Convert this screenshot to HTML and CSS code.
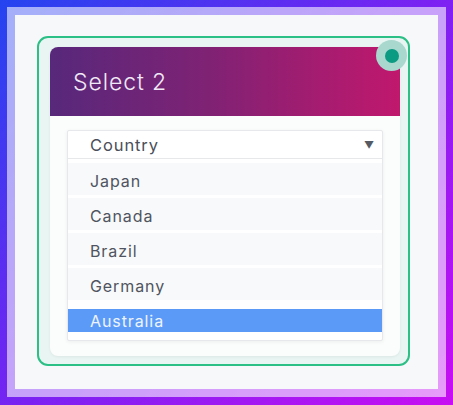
FILE: index.html
```html
<!DOCTYPE html>
<html>
<head>
<meta charset="utf-8">
<link rel="stylesheet" href="styles.css">
</head>
<body>
<div class="frame">
  <div class="card">
    <span class="badge"><span class="dot"></span></span>
    <div class="inner">
      <div class="header">Select 2</div>
      <div class="body">
        <div class="select">
          <div class="select-head"><span>Country</span><span class="arrow">▼</span></div>
          <ul class="list">
            <li class="opt">Japan</li>
            <li class="opt">Canada</li>
            <li class="opt">Brazil</li>
            <li class="opt">Germany</li>
            <li class="opt selected"><span>Australia</span></li>
          </ul>
        </div>
      </div>
    </div>
  </div>
</div>
</body>
</html>
```
FILE: styles.css
```css
html, body { margin: 0; padding: 0; }
body {
  width: 453px;
  height: 405px;
  box-sizing: border-box;
  padding: 7px 7px 8px 7px;
  background: linear-gradient(135deg, #2444f0 0%, #7a22f2 50%, #c80ef2 100%);
  font-family: Inter, "Open Sans", sans-serif;
}
.frame {
  height: 390px;
  box-sizing: border-box;
  border: 8px solid rgba(255,255,255,0.58);
  background: #f6f8fa;
  background-clip: padding-box;
  padding: 21px 28px 23px 22px;
}
.card {
  position: relative;
  height: 100%;
  box-sizing: border-box;
  border: 2.5px solid #2cbf86;
  border-radius: 11px;
  background: #e9f5f2;
  padding: 9px 8px 8px 11px;
}
.badge {
  position: absolute;
  right: 1px;
  top: 2px;
  width: 31px;
  height: 31px;
  border-radius: 50%;
  background: #a9d8cf;
  display: flex;
  align-items: center;
  justify-content: center;
}
.dot {
  width: 14px;
  height: 14px;
  border-radius: 50%;
  background: #0b9a82;
}
.inner {
  height: 100%;
  border-radius: 8px;
  background: #fbfcfc;
  box-shadow: 0 1px 3px rgba(0,0,0,0.06);
  overflow: hidden;
  display: flex;
  flex-direction: column;
}
.header {
  height: 69px;
  flex: none;
  box-sizing: border-box;
  padding-left: 23px;
  display: flex;
  align-items: center;
  background: linear-gradient(90deg, #57287b 0%, #7f2274 45%, #c0186d 100%);
  color: #f1e9f5;
  font-size: 23px;
  font-weight: 300;
  letter-spacing: 0.9px;
}
.body {
  padding: 14px 17px 0 17px;
}
.select {
  background: #fff;
  border: 1px solid #e6e8eb;
  border-radius: 2px;
  box-shadow: 0 1px 4px rgba(0,0,0,0.06);
}
.select-head {
  height: 27px;
  border-bottom: 1px solid #e7e8ea;
  display: flex;
  align-items: center;
  justify-content: space-between;
  padding: 0 8px 0 22px;
  color: #4a4f59;
  font-size: 16.5px;
  letter-spacing: 0.9px;
}
.arrow {
  font-size: 10px;
  color: #555a63;
  letter-spacing: 0;
}
.list {
  list-style: none;
  margin: 0;
  padding: 4px 0 2px 0;
}
.opt {
  height: 35px;
  box-sizing: border-box;
  border-bottom: 3px solid #fff;
  background: #f8f9fa;
  display: flex;
  align-items: center;
  padding-left: 22px;
  padding-top: 3px;
  color: #4f5460;
  font-size: 16px;
  letter-spacing: 0.9px;
}
.opt.selected {
  background: #fff;
  border-bottom: none;
  padding: 0;
  align-items: center;
}
.opt.selected span {
  display: flex;
  align-items: center;
  width: 100%;
  height: 23px;
  padding-left: 22px;
  background: #5b9bf7;
  color: #eef4ff;
}
```
